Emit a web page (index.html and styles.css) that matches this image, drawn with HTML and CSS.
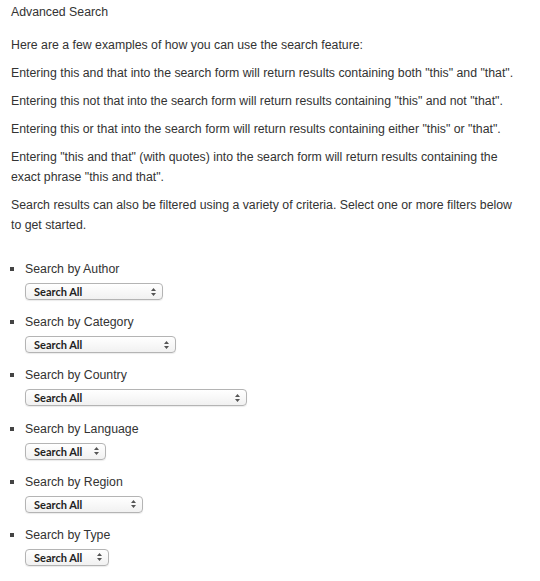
FILE: index.html
```html
<!DOCTYPE html>
<html lang="en">
<head>
	<meta charset="UTF-8">
	<title>Advanced Search</title>
	<link rel="stylesheet" href="styles.css">
</head>
<body>
	<div class="page">
		<h1 class="title">Advanced Search</h1>
		<p>Here are a few examples of how you can use the search feature:</p>
		<p>Entering this and that into the search form will return results containing both "this" and "that".</p>
		<p>Entering this not that into the search form will return results containing "this" and not "that".</p>
		<p>Entering this or that into the search form will return results containing either "this" or "that".</p>
		<p>Entering "this and that" (with quotes) into the search form will return results containing the exact phrase "this and that".</p>
		<p>Search results can also be filtered using a variety of criteria. Select one or more filters below to get started.</p>

		<ul class="filters">
			<li>
				<div class="label">Search by Author</div>
				<div class="select w-author"><span>Search All</span><svg width="5" height="8" viewBox="0 0 5 8"><path d="M2.5 0L5 3H0z M2.5 8L0 5h5z" fill="#555"/></svg></div>
			</li>
			<li>
				<div class="label">Search by Category</div>
				<div class="select w-category"><span>Search All</span><svg width="5" height="8" viewBox="0 0 5 8"><path d="M2.5 0L5 3H0z M2.5 8L0 5h5z" fill="#555"/></svg></div>
			</li>
			<li>
				<div class="label">Search by Country</div>
				<div class="select w-country"><span>Search All</span><svg width="5" height="8" viewBox="0 0 5 8"><path d="M2.5 0L5 3H0z M2.5 8L0 5h5z" fill="#555"/></svg></div>
			</li>
			<li>
				<div class="label">Search by Language</div>
				<div class="select w-language"><span>Search All</span><svg width="5" height="8" viewBox="0 0 5 8"><path d="M2.5 0L5 3H0z M2.5 8L0 5h5z" fill="#555"/></svg></div>
			</li>
			<li>
				<div class="label">Search by Region</div>
				<div class="select w-region"><span>Search All</span><svg width="5" height="8" viewBox="0 0 5 8"><path d="M2.5 0L5 3H0z M2.5 8L0 5h5z" fill="#555"/></svg></div>
			</li>
			<li>
				<div class="label">Search by Type</div>
				<div class="select w-type"><span>Search All</span><svg width="5" height="8" viewBox="0 0 5 8"><path d="M2.5 0L5 3H0z M2.5 8L0 5h5z" fill="#555"/></svg></div>
			</li>
		</ul>
	</div>
</body>
</html>
```

FILE: styles.css
```css
	body{
		margin: 0;
		background: #fff;
		color: #333;
		font-family: "Liberation Sans", Arial, sans-serif;
		font-size: 12.3px;
		line-height: 20px;
	}
	.page{
		padding: 2px 18px 0 11px;
	}
	.title{
		font-size: 12.3px;
		font-weight: normal;
		margin: 0 0 13px;
	}
	p{
		margin: 0 0 8px;
	}
	ul{
		list-style: none; margin: 0; padding: 0;
	}
	.filters{
		margin-top: 23px;
		padding-left: 14px;
	}
	.filters li{
		list-style: square;
		margin-bottom: 11.2px;
	}
	.filters li::marker{
		color: #444;
		font-size: 14px;
	}
	.label{
		height: 20px;
	}
	.select{
		margin-top: 4px;
		height: 17px;
		box-sizing: border-box;
		border: 1px solid #b4b4b4;
		border-radius: 4px;
		background: linear-gradient(#ffffff, #f1f1f1);
		box-shadow: 0 1px 1px rgba(0,0,0,0.08);
		display: flex;
		align-items: center;
		justify-content: space-between;
		padding: 0 6px 0 8px;
		font-family: Lato, "Liberation Sans", sans-serif;
		font-size: 11px;
		font-weight: bold;
		color: #222;
		line-height: 15px;
	}
	.w-author{ width: 138px; }
	.w-category{ width: 151px; }
	.w-country{ width: 222px; }
	.w-language{ width: 81px; }
	.w-region{ width: 118px; }
	.w-type{ width: 84px; }
```
